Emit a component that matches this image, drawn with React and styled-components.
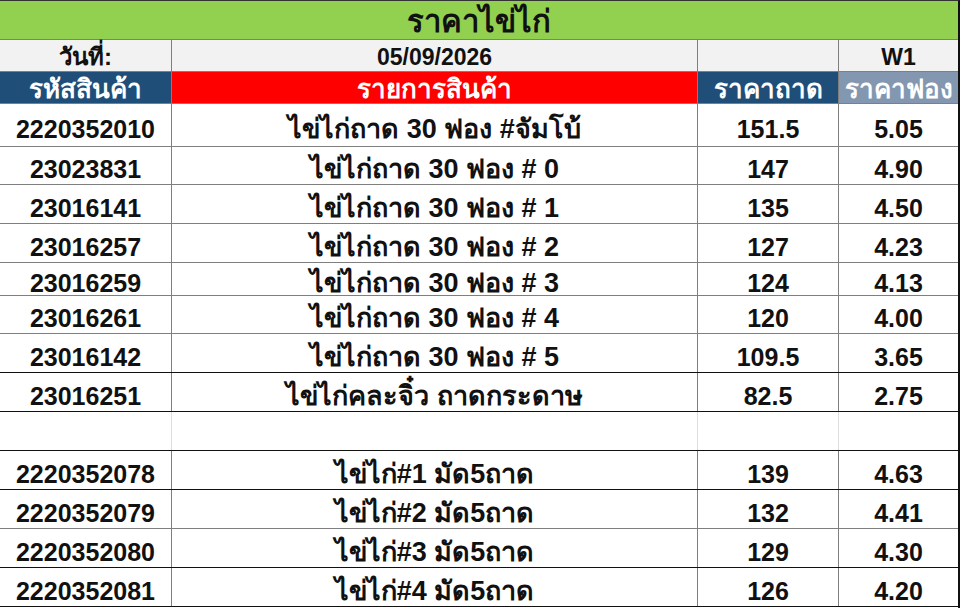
import React from 'react';
import styled, { createGlobalStyle } from 'styled-components';

const GlobalStyle = createGlobalStyle`
  html, body {
    margin: 0;
    padding: 0;
    background: #ffffff;
  }
  body {
    font-family: "Liberation Sans", Arial, "Noto Sans", "DejaVu Sans", sans-serif;
  }
`;

const COLS = '171px 526px 141px 120px';

const Sheet = styled.div`
  width: 960px;
  height: 608px;
  overflow: hidden;
  box-sizing: border-box;
  border-right: 2px solid #111;
  border-top: 1px solid #333;
  display: flex;
  flex-direction: column;
`;

const TitleBar = styled.div`
  height: 39px;
  background: #92d050;
  display: flex;
  align-items: center;
  justify-content: center;
  font-weight: 700;
  font-size: 31px;
  line-height: 1;
  padding-top: 2px;
  color: #111;
  border-bottom: 1px solid #7f7f7f;
  box-sizing: border-box;
`;

const Row = styled.div`
  display: grid;
  grid-template-columns: ${COLS};
  height: ${({ h }) => h}px;
  box-sizing: border-box;
  border-bottom: 1px solid ${({ line }) => line || '#7f7f7f'};
  background: ${({ bg }) => bg || '#fff'};
`;

const Cell = styled.div`
  display: flex;
  align-items: center;
  justify-content: center;
  box-sizing: border-box;
  min-height: 0;
  border-left: ${({ first, soft }) =>
    first ? 'none' : `1px solid ${soft ? '#dedede' : '#7f7f7f'}`};
  background: ${({ bg }) => bg || 'transparent'};
  color: ${({ light }) => (light ? '#fff' : '#111')};
  font-weight: 700;
  font-size: ${({ size }) => size || 25}px;
  line-height: 1;
  white-space: nowrap;
  padding-top: ${({ pt }) => pt || 0}px;
`;

const headers = [
  { text: 'รหัสสินค้า', bg: '#1f4e79' },
  { text: 'รายการสินค้า', bg: '#ff0000' },
  { text: 'ราคาถาด', bg: '#1f4e79' },
  { text: 'ราคาฟอง', bg: '#8497b0' }
];

const rows = [
  { code: '2220352010', name: 'ไข่ไก่ถาด 30 ฟอง #จัมโบ้', tray: '151.5', egg: '5.05', h: 43 },
  { code: '23023831', name: 'ไข่ไก่ถาด 30 ฟอง # 0', tray: '147', egg: '4.90', h: 38 },
  { code: '23016141', name: 'ไข่ไก่ถาด 30 ฟอง # 1', tray: '135', egg: '4.50', h: 39 },
  { code: '23016257', name: 'ไข่ไก่ถาด 30 ฟอง # 2', tray: '127', egg: '4.23', h: 39 },
  { code: '23016259', name: 'ไข่ไก่ถาด 30 ฟอง # 3', tray: '124', egg: '4.13', h: 33 },
  { code: '23016261', name: 'ไข่ไก่ถาด 30 ฟอง # 4', tray: '120', egg: '4.00', h: 38 },
  { code: '23016142', name: 'ไข่ไก่ถาด 30 ฟอง # 5', tray: '109.5', egg: '3.65', h: 39, line: '#111' },
  { code: '23016251', name: 'ไข่ไก่คละจิ๋ว ถาดกระดาษ', tray: '82.5', egg: '2.75', h: 39, line: '#111' },
  { blank: true, h: 39, line: '#111' },
  { code: '2220352078', name: 'ไข่ไก่#1 มัด5ถาด', tray: '139', egg: '4.63', h: 39, line: '#111' },
  { code: '2220352079', name: 'ไข่ไก่#2 มัด5ถาด', tray: '132', egg: '4.41', h: 39 },
  { code: '2220352080', name: 'ไข่ไก่#3 มัด5ถาด', tray: '129', egg: '4.30', h: 39, line: '#111' },
  { code: '2220352081', name: 'ไข่ไก่#4 มัด5ถาด', tray: '126', egg: '4.20', h: 39, line: '#111' }
];

export default function App() {
  return (
    <>
      <GlobalStyle />
      <Sheet>
        <TitleBar>ราคาไข่ไก่</TitleBar>
        <Row h={32} bg="#f2f2f2">
          <Cell first size={24} pt={3}>วันที่:</Cell>
          <Cell size={23} pt={3}>05/09/2026</Cell>
          <Cell />
          <Cell size={23} pt={3}>W1</Cell>
        </Row>
        <Row h={32} line="#7f7f7f">
          {headers.map((hd, i) => (
            <Cell key={hd.text} first={i === 0} bg={hd.bg} light size={26} pt={2}>
              {hd.text}
            </Cell>
          ))}
        </Row>
        {rows.map((r, i) =>
          r.blank ? (
            <Row key={`blank-${i}`} h={r.h} line={r.line}>
              <Cell first />
              <Cell soft />
              <Cell soft />
              <Cell soft />
            </Row>
          ) : (
            <Row key={r.code} h={r.h} line={r.line}>
              <Cell first pt={8}>{r.code}</Cell>
              <Cell pt={8} size={27}>{r.name}</Cell>
              <Cell pt={8}>{r.tray}</Cell>
              <Cell pt={8}>{r.egg}</Cell>
            </Row>
          )
        )}
      </Sheet>
    </>
  );
}
